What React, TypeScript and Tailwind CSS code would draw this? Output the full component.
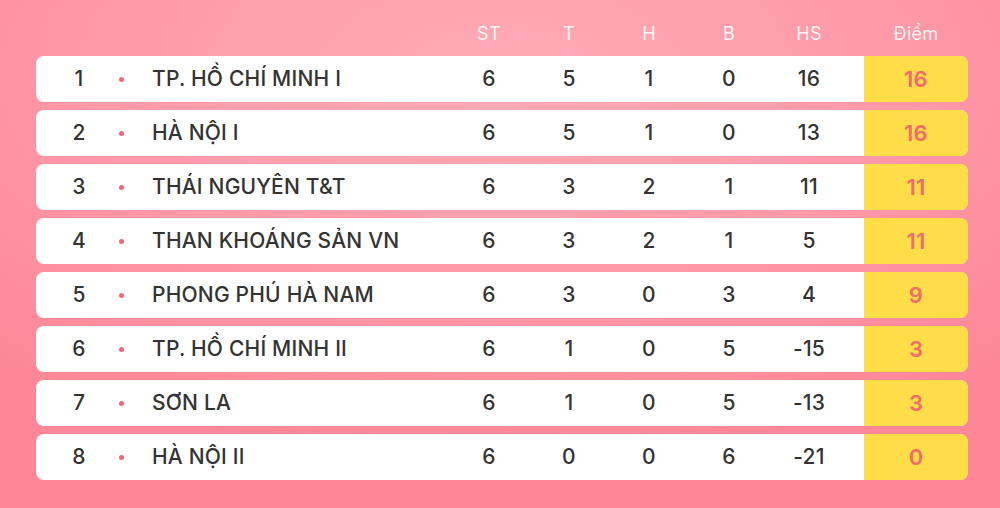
import React from "react";

const rows = [
  { r: 1, name: "TP. HỒ CHÍ MINH I", st: 6, t: 5, h: 1, b: 0, hs: 16, p: 16 },
  { r: 2, name: "HÀ NỘI I", st: 6, t: 5, h: 1, b: 0, hs: 13, p: 16 },
  { r: 3, name: "THÁI NGUYÊN T&T", st: 6, t: 3, h: 2, b: 1, hs: 11, p: 11 },
  { r: 4, name: "THAN KHOÁNG SẢN VN", st: 6, t: 3, h: 2, b: 1, hs: 5, p: 11 },
  { r: 5, name: "PHONG PHÚ HÀ NAM", st: 6, t: 3, h: 0, b: 3, hs: 4, p: 9 },
  { r: 6, name: "TP. HỒ CHÍ MINH II", st: 6, t: 1, h: 0, b: 5, hs: -15, p: 3 },
  { r: 7, name: "SƠN LA", st: 6, t: 1, h: 0, b: 5, hs: -13, p: 3 },
  { r: 8, name: "HÀ NỘI II", st: 6, t: 0, h: 0, b: 6, hs: -21, p: 0 },
];

export default function App() {
  return (
    <div
      className="w-[1000px] h-[508px] overflow-hidden bg-[radial-gradient(ellipse_75%_75%_at_50%_15%,#ffabb7_0%,#ff98a7_55%,#fd8797_100%)] pl-[36px] pr-[32px] pt-[18px]"
      style={{ fontFamily: "Inter, 'Noto Sans', sans-serif" }}
    >
      <div className="flex h-[30px] items-center text-[18px] tracking-[0.3px] text-[#fff3f5] mb-[8px]">
        <div className="w-[22px]" />
        <div className="w-[42px]" />
        <div className="w-[42px]" />
        <div className="w-[10px]" />
        <div className="w-[297px]" />
        <div className="w-[80px] text-center">ST</div>
        <div className="w-[80px] text-center">T</div>
        <div className="w-[80px] text-center">H</div>
        <div className="w-[80px] text-center">B</div>
        <div className="w-[80px] text-center">HS</div>
        <div className="w-[15px]" />
        <div className="flex-1 text-center">Điểm</div>
      </div>
      <div className="flex flex-col gap-[8px]">
        {rows.map((row) => (
          <div
            key={row.r}
            className="flex h-[46px] items-center rounded-[8px] bg-white text-[21px] tracking-[0.2px] font-medium text-[#333333] overflow-hidden"
          >
            <div className="w-[22px]" />
            <div className="w-[42px] text-center">{row.r}</div>
            <div className="w-[42px] flex justify-center">
              <span className="block w-[5px] h-[5px] rounded-full bg-[#f2677c]" />
            </div>
            <div className="w-[10px]" />
            <div className="w-[297px] whitespace-nowrap">{row.name}</div>
            <div className="w-[80px] text-center">{row.st}</div>
            <div className="w-[80px] text-center">{row.t}</div>
            <div className="w-[80px] text-center">{row.h}</div>
            <div className="w-[80px] text-center">{row.b}</div>
            <div className="w-[80px] text-center">{row.hs}</div>
            <div className="w-[15px]" />
            <div className="flex-1 h-full flex items-center justify-center bg-[#ffdd48] text-[#f36b6b] font-semibold text-[22px]">
              {row.p}
            </div>
          </div>
        ))}
      </div>
    </div>
  );
}
